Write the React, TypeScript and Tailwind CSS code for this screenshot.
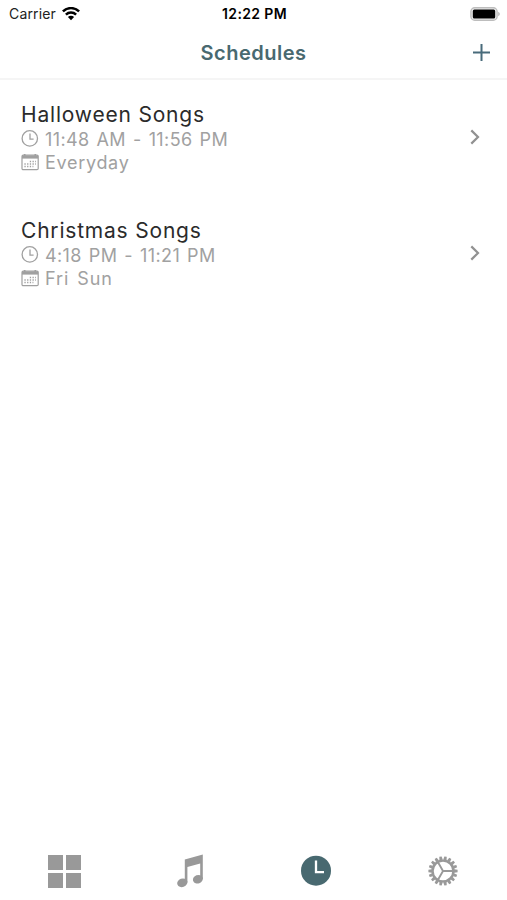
import React from "react";

const teeth = Array.from({ length: 18 }, (_, i) => i * 20);

function WifiIcon() {
  return (
    <svg width="18" height="14" viewBox="0 0 18 14" fill="none" stroke="#000" strokeWidth="2.5">
      <path d="M0.9 4.4A11.6 11.6 0 0 1 17.1 4.4" />
      <path d="M3.9 7.7A7.3 7.3 0 0 1 14.1 7.7" />
      <path d="M9 13.2L5.9 10A4.4 4.4 0 0 1 12.1 10Z" fill="#000" stroke="none" />
    </svg>
  );
}

function BatteryIcon() {
  return (
    <svg width="30" height="14" viewBox="0 0 30 14">
      <rect x="0.9" y="0.8" width="26.2" height="12.4" rx="3.8" fill="#eee" stroke="#bdbdbd" strokeWidth="1.4" />
      <rect x="2.8" y="2.5" width="22.4" height="9" rx="1.5" fill="#000" />
      <path d="M28.3 4.8C30.1 5.7 30.1 8.3 28.3 9.2Z" fill="#aaa" />
    </svg>
  );
}

function ClockIcon() {
  return (
    <svg width="18" height="18" viewBox="0 0 18 18" fill="none" stroke="#a0a0a0" strokeWidth="1.3">
      <circle cx="8.8" cy="8.4" r="7.7" />
      <path d="M9 3.5V9.2H12.6" />
    </svg>
  );
}

function CalendarIcon() {
  return (
    <svg width="18" height="17" viewBox="0 0 18 17" fill="none" stroke="#a0a0a0">
      <rect x="1" y="1.2" width="16.2" height="14.4" rx="1.2" strokeWidth="1.2" />
      <path d="M1 3H17.2" strokeWidth="3.2" />
      <path d="M3.7 0V3M14.3 0V3" strokeWidth="1.6" />
      <path d="M8.8 7.5H15M3.4 10H15M3.4 12.5H12.4" strokeWidth="1.4" strokeDasharray="1.3 1.4" />
    </svg>
  );
}

function MusicIcon() {
  return (
    <svg width="28" height="34" viewBox="0 0 28 34" fill="#999">
      <path d="M8.8 5.4L26.8 0.5V25H24.2V9.4L11.4 13V28.5H8.8Z" />
      <ellipse cx="6.3" cy="28.8" rx="5.2" ry="4.2" transform="rotate(-20 6.3 28.8)" />
      <ellipse cx="21.9" cy="25.2" rx="5" ry="4.2" transform="rotate(-20 21.9 25.2)" />
    </svg>
  );
}

function GearIcon() {
  return (
    <svg className="mr-[2px]" width="30" height="30" viewBox="-15 -15 30 30" fill="none" stroke="#999">
      <circle r="10.4" strokeWidth="2.3" />
      <path d="M0 0H10.5M0 0L-5.3 -9.2M0 0L-5.3 9.2" strokeWidth="1.9" />
      {teeth.map((angle) => (
        <path key={angle} d="M-1.7 -11L-1.2 -14.6H1.2L1.7 -11Z" transform={`rotate(${angle + 10})`} fill="#999" stroke="none" />
      ))}
    </svg>
  );
}

function Schedule({ title, time, days, daysClass }: {
  title: string;
  time: string;
  days: string;
  daysClass: string;
}) {
  return (
    <div className="h-[116px] pl-[21px] pr-[27px] pt-[22px] flex justify-between whitespace-nowrap">
      <div>
        <h2 className="h-[25px] leading-[25px] text-[21px] text-[#2b2b2b] tracking-[0.8px]">{title}</h2>
        <div className="h-6 flex items-center text-[#a1a1a1] text-[18px] gap-[6px]">
          <ClockIcon />
          <span className="tracking-[0.4px] [word-spacing:1.5px]">{time}</span>
        </div>
        <div className="h-[22px] flex items-center text-[#a1a1a1] text-[18px] gap-[6px]">
          <CalendarIcon />
          <span className={daysClass}>{days}</span>
        </div>
      </div>
      <svg className="mt-[27px]" width="10" height="16" viewBox="0 0 10 16" fill="none" stroke="#919191" strokeWidth="2.2">
        <path d="M1.3 1.4L8 8L1.3 14.6" />
      </svg>
    </div>
  );
}

export default function App() {
  return (
    <div className="w-full h-[900px] bg-white flex flex-col font-['Inter','Liberation_Sans',sans-serif]">
      <div className="h-[27px] pl-[9px] pr-[7px] grid grid-cols-[1fr_auto_1fr] items-center text-sm leading-none">
        <div className="flex items-center gap-[6px] text-[#222]">
          <span className="tracking-[0.15px]">Carrier</span>
          <WifiIcon />
        </div>
        <span className="font-semibold text-black tracking-[0.35px]">12:22 PM</span>
        <div className="flex justify-end">
          <BatteryIcon />
        </div>
      </div>
      <header className="h-[53px] px-4 grid grid-cols-[1fr_auto_1fr] items-center border-b-2 border-[#f5f5f5]">
        <span />
        <h1 className="text-[20px] font-semibold text-[#486970] tracking-[0.5px]">Schedules</h1>
        <svg className="justify-self-end" width="19" height="18" viewBox="0 0 19 18" stroke="#486b7b" strokeWidth="2">
          <path d="M9.5 0V17M1 8.5H18" />
        </svg>
      </header>
      <main className="flex-1">
        <Schedule title="Halloween Songs" time="11:48 AM - 11:56 PM" days="Everyday" daysClass="tracking-[0.7px]" />
        <Schedule title="Christmas Songs" time="4:18 PM - 11:21 PM" days="Fri Sun" daysClass="tracking-[0.9px] [word-spacing:2px]" />
      </main>
      <nav className="h-[58px] grid grid-cols-4 items-center justify-items-center">
        <div className="ml-[2px] grid grid-cols-2 gap-[3px]">
          <span className="size-[15px] bg-[#999]" />
          <span className="size-[15px] bg-[#999]" />
          <span className="size-[15px] bg-[#999]" />
          <span className="size-[15px] bg-[#999]" />
        </div>
        <MusicIcon />
        <svg width="32" height="32" viewBox="0 0 32 32" fill="none">
          <circle cx="15" cy="15.7" r="15" fill="#486970" />
          <path d="M15 5.5V17.2H23" stroke="#fff" strokeWidth="2.3" />
        </svg>
        <GearIcon />
      </nav>
    </div>
  );
}
